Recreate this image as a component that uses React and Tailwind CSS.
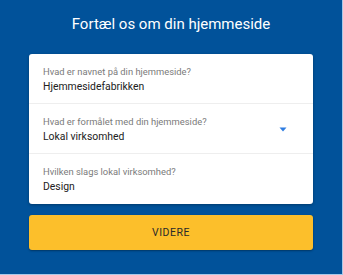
export default function App() {
  const rows = [
    { label: "Hvad er navnet på din hjemmeside?", value: "Hjemmesidefabrikken" },
    { label: "Hvad er formålet med din hjemmeside?", value: "Lokal virksomhed", select: true },
    { label: "Hvilken slags lokal virksomhed?", value: "Design" },
  ];
  return (
    <div className="w-[343px] h-[275px] bg-[#01529a] border-r border-b border-[#a9c8e8] flex flex-col items-center" style={{ fontFamily: "Roboto, 'Noto Sans', sans-serif" }}>
      <h1 className="text-white text-[15px] leading-[18px] mt-[15px] mb-[21px]">Fortæl os om din hjemmeside</h1>
      <div className="w-[284px] bg-white rounded-[3px] shadow-[0_1px_3px_rgba(0,0,0,0.3)] flex flex-col">
        {rows.map((r, i) => (
          <div key={i} className={`h-[50px] px-[14px] pt-[12px] flex items-start justify-between ${i < 2 ? "border-b border-[#eeeeee]" : ""}`}>
            <div className="flex flex-col">
              <span className="text-[9.4px] leading-[11px] text-[#7a7a7a]">{r.label}</span>
              <span className="text-[10.4px] leading-[13px] text-[#212121] mt-[3px]">{r.value}</span>
            </div>
            {r.select && (
              <svg width="8" height="5" viewBox="0 0 8 5" className="mt-[11px] mr-[12px]">
                <path d="M0.5 0.5 H7.5 L4 4.5 Z" fill="#2f7de1" />
              </svg>
            )}
          </div>
        ))}
      </div>
      <button className="w-[284px] h-[35px] mt-[11px] bg-[#fcbf2b] rounded-[3px] shadow-[0_1px_2px_rgba(0,0,0,0.35)] text-[10.5px] tracking-[0.5px] text-[#2a2a2a]">VIDERE</button>
    </div>
  );
}
